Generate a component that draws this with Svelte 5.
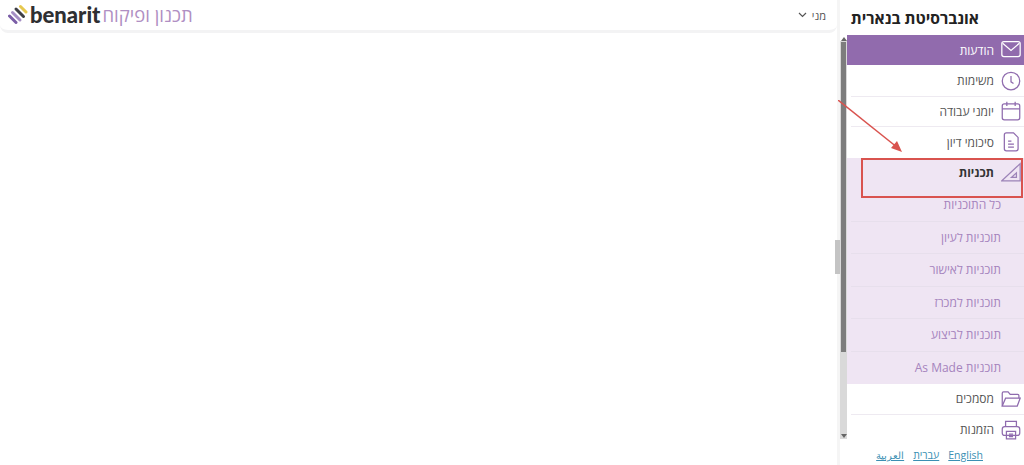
<script>
  const subs = ['כל התוכניות','תוכניות לעיון','תוכניות לאישור','תוכניות למכרז','תוכניות לביצוע','תוכניות As Made'];
</script>

<div class="page">
  <div class="main">
    <header class="topbar">
      <div class="brand">
        <svg class="mark" width="20" height="20" viewBox="0 0 20 20" aria-hidden="true">
          <path d="M8 18.500 L1.500 12" stroke="#7b5ea7" stroke-width="3" stroke-linecap="round"/>
          <path d="M12 16 L4.500 8.500" stroke="#a58fc4" stroke-width="3" stroke-linecap="round"/>
          <path d="M15.500 12.500 L8 5" stroke="#3f3f46" stroke-width="3" stroke-linecap="round"/>
          <path d="M18 8 L12.500 2.500" stroke="#e6c84f" stroke-width="3" stroke-linecap="round"/>
        </svg>
        <span class="logo">benarit</span>
        <span class="product">תכנון ופיקוח</span>
      </div>
      <div class="user"><svg width="9" height="6" viewBox="0 0 9 6"><path d="M1 1l3.500 3.500L8 1" fill="none" stroke="#555" stroke-width="1.200"/></svg><span>מני</span></div>
    </header>
    <div class="outer-thumb"></div>
  </div>

  <aside class="side">
    <div class="org">אונברסיטת בנארית</div>
    <div class="scroll">
      <div class="track">
        <span class="up"></span>
        <div class="thumb"></div>
        <span class="down"></span>
      </div>
      <nav>
        <a class="item active"><svg viewBox="0 0 24 24"><rect x="1" y="2" width="22" height="18" rx="2.500"/><path d="M2 4l10 8.500L22 4"/></svg><span>הודעות</span></a>
        <a class="item line"><svg viewBox="0 0 24 24"><circle cx="12" cy="12" r="10.500"/><path d="M12 6v7l3 2"/></svg><span>משימות</span></a>
        <a class="item line"><svg viewBox="0 0 24 24"><rect x="1.500" y="3.500" width="21" height="19" rx="2.500"/><path d="M1.500 9.500h21M7 1v5M17 1v5"/></svg><span>יומני עבודה</span></a>
        <a class="item"><svg viewBox="0 0 24 24"><path d="M4 3.500A2.500 2.500 0 0 1 6.500 1H15l5.500 5.500V20a2.500 2.500 0 0 1-2.500 2.500H6.500A2.500 2.500 0 0 1 4 20z"/><path d="M8.500 11h4M8.500 14.500h7M8.500 18h7"/></svg><span>סיכומי דיון</span></a>
        <div class="group">
          <a class="item head"><svg class="tri" viewBox="0 0 24 24"><path d="M1 22.500L23 2v20.500z"/><path d="M12.500 18.500l6-5.500v5.500z"/></svg><span>תכניות</span></a>
          {#each subs as s, i}
            <a class="sub" class:line={i < subs.length - 1}>{s}</a>
          {/each}
        </div>
        <a class="item line"><svg viewBox="0 0 24 24"><path d="M1.500 20V5A1.500 1.500 0 0 1 3 3.500h5.500L11 6.500h9A1.500 1.500 0 0 1 21.500 8v3"/><path d="M1.500 20.500L5.500 11H23l-3.500 9.500z"/></svg><span>מסמכים</span></a>
        <a class="item"><svg viewBox="0 0 24 24"><path d="M5.500 8V1.500h13V8"/><rect x="1.500" y="8" width="21" height="10.500" rx="3"/><path d="M6.500 13.500h11v9h-11z"/><path d="M9.500 17h5M9.500 20h5"/></svg><span>הזמנות</span></a>
      </nav>
    </div>
    <div class="langs">
      <a class="ar">العربية</a><a>עברית</a><a>English</a>
    </div>
  </aside>

  <div class="callout"></div>
  <svg class="arrow" width="80" height="60" viewBox="0 0 80 60" aria-hidden="true">
    <path d="M0 0L60 48" stroke="#d9534f" stroke-width="1.500" fill="none"/>
    <path d="M64 52L53 48L59 41z" fill="#d9534f"/>
  </svg>
</div>

<style>
  :global(body) { margin: 0; background: #fff; }
  .page {
    position: relative;
    display: flex;
    width: 1024px;
    height: 465px;
    overflow: hidden;
    font-family: "Open Sans", "Liberation Sans", sans-serif;
    color: #444;
  }
  .main {
    position: relative;
    flex: 1;
    min-width: 0;
  }
  .topbar {
    height: 33px;
    box-sizing: border-box;
    display: flex;
    align-items: center;
    justify-content: space-between;
    padding: 0 11px 0 8px;
    border-bottom: 3px solid #f3f3f4;
    border-radius: 0 0 8px 8px;
  }
  .brand { display: flex; align-items: center; gap: 2px; }
  .mark { display: block; margin-top: -2px; }
  .logo {
    font-family: "Lato", "Liberation Sans", sans-serif;
    font-weight: 900;
    font-size: 22px;
    color: #2f2f32;
    line-height: 24px;
  }
  .product {
    font-size: 18.500px;
    line-height: 24px;
    color: #b08fc3;
    direction: rtl;
  }
  .user {
    display: flex;
    align-items: center;
    gap: 5px;
    font-size: 11px;
    color: #555;
  }
  .outer-thumb {
    position: absolute;
    right: -3px;
    top: 240px;
    width: 5px;
    height: 34px;
    background: #c4c4c4;
  }
  .side {
    width: 187px;
    flex: none;
    display: flex;
    flex-direction: column;
    box-sizing: border-box;
    border-left: 3px solid #f5f5f5;
  }
  .org {
    height: 35px;
    box-sizing: border-box;
    direction: rtl;
    font-weight: 700;
    font-size: 15.700px;
    line-height: 37px;
    padding-right: 45px;
    color: #222;
    white-space: nowrap;
  }
  .scroll { display: flex; height: 410px; }
  .track {
    width: 7px;
    flex: none;
    display: flex;
    flex-direction: column;
    align-items: center;
    height: 404px;
    background: linear-gradient(#fff 0 6px, #d9d9d9 6px);
  }
  .up, .down { width: 0; height: 0; border-left: 3px solid transparent; border-right: 3px solid transparent; margin: 2px 0 1px; flex: none; }
  .up { border-bottom: 4px solid #666; }
  .down { border-top: 4px solid #666; margin-top: auto; }
  .thumb { height: 310px; width: 5px; background: #7d7d7d; flex: none; }
  nav { flex: 1; min-width: 0; direction: rtl; }
  .item {
    display: flex;
    align-items: center;
    gap: 7px;
    height: 30.500px;
    box-sizing: border-box;
    padding-right: 3px;
    font-size: 12px;
    color: #555;
  }
  .item svg {
    width: 20px;
    height: 20px;
    flex: none;
    fill: none;
    stroke: #8f6bae;
    stroke-width: 1.500;
  }
  .item .tri { stroke: #9c83b8; }
  .item.active {
    background: #916bad;
    color: #fff;
    height: 30px;
    margin-bottom: 1px;
  }
  .item.active svg { stroke: #fff; }
  .line { border-bottom: 1px solid #eeeaf1; margin-left: 4px; }
  .group { background: #efe5f3; }
  .head { height: 31.500px; font-weight: 700; color: #333; padding-bottom: 2px; }
  .sub {
    display: flex;
    align-items: center;
    height: 32.500px;
    box-sizing: border-box;
    padding-right: 23px;
    font-size: 12px;
    color: #a583bd;
  }
  .sub.line { border-bottom: 1px solid #e7dfec; }
  .langs {
    display: flex;
    justify-content: flex-end;
    align-items: baseline;
    gap: 9px;
    font-size: 10.500px;
    direction: ltr;
    margin-top: 3px;
    padding-right: 41px;
  }
  .langs a { color: #3b8fb3; text-decoration: underline; }
  .langs .ar { font-size: 9.500px; }
  .callout {
    position: absolute;
    left: 861px;
    top: 158px;
    width: 162px;
    height: 40px;
    box-sizing: border-box;
    border: 2px solid #d9534f;
  }
  .arrow { position: absolute; left: 838px; top: 100px; }
</style>
